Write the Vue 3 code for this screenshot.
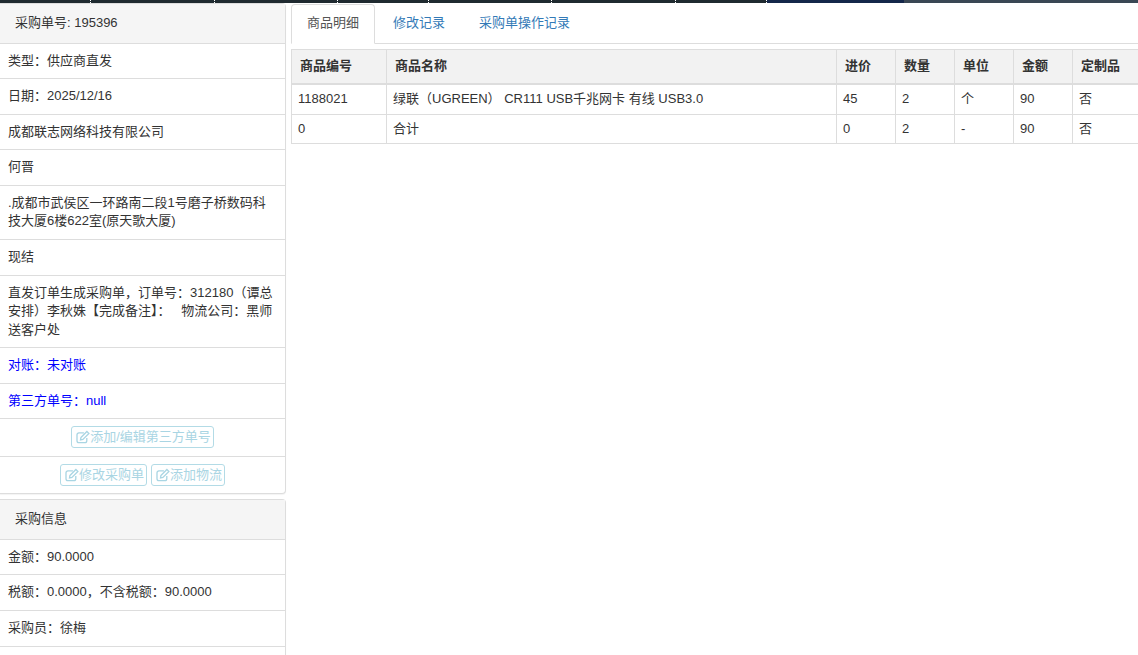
<script setup>
const strip = [
  { w: 91, c: '#1f2a30' }, { w: 124, c: '#1f2a30' }, { w: 123, c: '#1f2a30' }, { w: 91, c: '#1f2a30' },
  { w: 123, c: '#1f2a30' }, { w: 124, c: '#1f2a30' }, { w: 91, c: '#1f2a30' }, { w: 137, c: '#14274a', plain: true },
  { w: 234, c: '#3a4754', plain: true }
]
const rows = [
  ['1188021', '绿联（UGREEN） CR111 USB千兆网卡 有线 USB3.0', '45', '2', '个', '90', '否'],
  ['0', '合计', '0', '2', '-', '90', '否']
]
const heads = ['商品编号', '商品名称', '进价', '数量', '单位', '金额', '定制品']
const widths = [95, 450, 59, 59, 59, 59, 66]
</script>

<template>
  <div class="page">
    <div class="strip">
      <span
        v-for="(s, i) in strip"
        :key="i"
        class="seg"
        :class="{ plain: s.plain }"
        :style="{ width: s.w + 'px', background: s.c }"
      ></span>
    </div>
    <div class="main">
      <aside class="side">
        <section class="panel">
          <h3 class="head">采购单号: 195396</h3>
          <div class="row">类型：供应商直发</div>
          <div class="row">日期：2025/12/16</div>
          <div class="row">成都联志网络科技有限公司</div>
          <div class="row">何晋</div>
          <div class="row">.成都市武侯区一环路南二段1号磨子桥数码科技大厦6楼622室(原天歌大厦)</div>
          <div class="row">现结</div>
          <div class="row">直发订单生成采购单，订单号：312180（谭总安排）李秋姝【完成备注】：&nbsp;&nbsp; 物流公司：黑师送客户处</div>
          <div class="row blue">对账：未对账</div>
          <div class="row blue">第三方单号：null</div>
          <div class="row actions">
            <button class="btn" type="button">
              <svg class="ico" viewBox="0 0 14 14"><path d="M10.800 8v2.800a1.900 1.900 0 0 1-1.900 1.900H2.900A1.900 1.900 0 0 1 1 10.800V4.800a1.900 1.900 0 0 1 1.900-1.900h5" fill="none" stroke="currentColor" stroke-width="1.300"/><path d="M4.900 7.500 10.900 1.500l2 2-6 6-2.400.4z" fill="none" stroke="currentColor" stroke-width="1.300"/></svg>添加/编辑第三方单号
            </button>
          </div>
          <div class="row actions last">
            <button class="btn" type="button">
              <svg class="ico" viewBox="0 0 14 14"><path d="M10.800 8v2.800a1.900 1.900 0 0 1-1.900 1.900H2.900A1.900 1.900 0 0 1 1 10.800V4.800a1.900 1.900 0 0 1 1.900-1.900h5" fill="none" stroke="currentColor" stroke-width="1.300"/><path d="M4.900 7.500 10.900 1.500l2 2-6 6-2.400.4z" fill="none" stroke="currentColor" stroke-width="1.300"/></svg>修改采购单
            </button>
            <button class="btn" type="button">
              <svg class="ico" viewBox="0 0 14 14"><path d="M10.800 8v2.800a1.900 1.900 0 0 1-1.900 1.900H2.900A1.900 1.900 0 0 1 1 10.800V4.800a1.900 1.900 0 0 1 1.900-1.900h5" fill="none" stroke="currentColor" stroke-width="1.300"/><path d="M4.900 7.500 10.900 1.500l2 2-6 6-2.400.4z" fill="none" stroke="currentColor" stroke-width="1.300"/></svg>添加物流
            </button>
          </div>
        </section>
        <section class="panel second">
          <h3 class="head">采购信息</h3>
          <div class="row">金额：90.0000</div>
          <div class="row">税额：0.0000，不含税额：90.0000</div>
          <div class="row">采购员：徐梅</div>
          <div class="row">&nbsp;</div>
        </section>
      </aside>
      <div class="content">
        <nav class="tabs">
          <a class="tab active">商品明细</a>
          <a class="tab">修改记录</a>
          <a class="tab">采购单操作记录</a>
        </nav>
        <table class="grid">
          <colgroup>
            <col v-for="(w, i) in widths" :key="i" :style="{ width: w + 'px' }" />
          </colgroup>
          <thead>
            <tr><th v-for="h in heads" :key="h">{{ h }}</th></tr>
          </thead>
          <tbody>
            <tr v-for="(r, i) in rows" :key="i">
              <td v-for="(c, j) in r" :key="j">{{ c }}</td>
            </tr>
          </tbody>
        </table>
      </div>
    </div>
  </div>
</template>

<style>
html, body { margin: 0; overflow: hidden; background: #fff; }
</style>

<style scoped>
.page {
  width: 1138px;
  height: 655px;
  overflow: hidden;
  font-family: "Liberation Sans", "Noto Sans CJK SC", sans-serif;
  font-size: 13px;
  line-height: 18.57px;
  color: #333;
}
.strip { display: flex; height: 3px; }
.seg { display: block; flex: none; box-sizing: border-box; border-right: 1px dotted #fff; }
.seg.plain { border-right: 0; }
.main { display: flex; }
.side { width: 286px; flex: none; }
.panel {
  box-sizing: border-box;
  border: 1px solid #ddd;
  border-left: 0;
  border-radius: 0 4px 4px 0;
  background: #fff;
  box-shadow: 0 1px 1px rgba(0, 0, 0, .05);
}
.second { margin-top: 5px; }
.head {
  margin: 0;
  padding: 10px 15px;
  font-size: 13px;
  font-weight: 400;
  line-height: 18.57px;
  background: #f5f5f5;
  border-bottom: 1px solid #ddd;
}
.row {
  padding: 8px;
  border-bottom: 1px solid #ddd;
}
.blue { color: #0000ff; }
.actions {
  display: flex;
  justify-content: center;
  gap: 4px;
  padding: 7px 8px 8px;
}
.actions.last { border-bottom: 0; padding-bottom: 7px; }
.btn {
  display: inline-flex;
  align-items: center;
  box-sizing: border-box;
  height: 22px;
  padding: 0 2px 0 4px;
  font: inherit;
  color: #a9d5e3;
  background: #fff;
  border: 1px solid #b3dbe6;
  border-radius: 3px;
}
.ico { width: 14px; height: 14px; flex: none; }
.content { flex: 1; min-width: 0; margin-left: 5px; }
.tabs {
  display: flex;
  gap: 2px;
  height: 40px;
  box-sizing: border-box;
  border-bottom: 1px solid #ddd;
  margin-top: 1px;
}
.tab {
  box-sizing: border-box;
  height: 40px;
  padding: 9px 15px;
  border: 1px solid transparent;
  border-radius: 4px 4px 0 0;
  color: #337ab7;
}
.tab.active {
  color: #555;
  background: #fff;
  border-color: #ddd #ddd #fff;
}
.grid {
  margin-top: 5px;
  width: 847px;
  table-layout: fixed;
  border-collapse: collapse;
  border-spacing: 0;
}
th, td {
  border: 1px solid #ddd;
  text-align: left;
}
th {
  padding: 7px 8px 7.5px;
  font-weight: 700;
  background: #f2f2f2;
  border-bottom-width: 2px;
}
td { padding: 5px 5px 5px 6px; }
</style>
